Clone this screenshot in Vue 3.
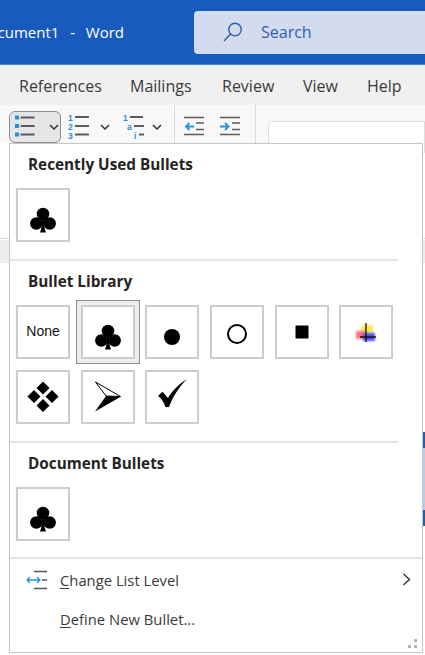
<template>
  <div class="app">
    <header class="titlebar">
      <div class="doc-name"><span>Document1&nbsp;&nbsp;-&nbsp;&nbsp;Word</span></div>
      <div class="search">
        <svg class="search-icon" width="20" height="22" viewBox="0 0 20 22">
          <circle cx="12" cy="8.5" r="6.2" fill="none" stroke="#2f5fae" stroke-width="1.4" />
          <path d="M7.6 13 L1 20" fill="none" stroke="#2f5fae" stroke-width="1.4" />
        </svg>
        <span>Search</span>
      </div>
    </header>

    <nav class="tabs">
      <span v-for="t in tabs" :key="t.name" class="tab" :style="{ width: t.width + 'px' }">{{ t.name }}</span>
    </nav>

    <div class="ribbon">
      <button class="rb-btn bullets active">
        <svg width="24" height="26" viewBox="0 0 24 26">
          <g fill="#2b8fdc">
            <rect x="1" y="1.5" width="4" height="4" />
            <rect x="1" y="10" width="4" height="4" />
            <rect x="1" y="18.500" width="4" height="4" />
          </g>
          <path d="M6.500 3.500H20.500M6.500 12H20.500M6.500 20.500H20.500" stroke="#5c5c5c" stroke-width="1.8" />
        </svg>
        <svg class="chev" width="10" height="6" viewBox="0 0 10 6"><path d="M1 1l4 4 4-4" fill="none" stroke="#333" stroke-width="1.5" /></svg>
      </button>

      <button class="rb-btn numbering">
        <svg width="24" height="28" viewBox="0 0 24 28">
          <g class="num-text">
            <text x="3" y="7.500">1</text>
            <text x="3" y="16.500">2</text>
            <text x="3" y="25.500">3</text>
          </g>
          <path d="M10 4H24M10 13H24M10 21.500H24" stroke="#5c5c5c" stroke-width="1.8" />
        </svg>
        <svg class="chev" width="10" height="6" viewBox="0 0 10 6"><path d="M1 1l4 4 4-4" fill="none" stroke="#333" stroke-width="1.5" /></svg>
      </button>

      <button class="rb-btn multilevel">
        <svg width="30" height="28" viewBox="0 0 30 28">
          <g class="num-text">
            <text x="7" y="7.500">1</text>
            <text x="11" y="16.500">a</text>
            <text x="18" y="25.500">i</text>
          </g>
          <path d="M14 4H27M18 13H28M23 21.500H28" stroke="#5c5c5c" stroke-width="1.8" />
        </svg>
        <svg class="chev" width="10" height="6" viewBox="0 0 10 6"><path d="M1 1l4 4 4-4" fill="none" stroke="#333" stroke-width="1.5" /></svg>
      </button>

      <i class="rb-sep"></i>

      <svg class="indent" width="22" height="24" viewBox="0 0 22 24">
        <path d="M1 3.500H21M13 9H21M13 15.500H21M1 20.500H21" stroke="#5c5c5c" stroke-width="1.6" />
        <path d="M11 12.500H3M6.500 9L3 12.500 6.500 16" fill="none" stroke="#2b8fdc" stroke-width="1.8" />
      </svg>
      <svg class="indent second" width="22" height="24" viewBox="0 0 22 24">
        <path d="M1 3.500H21M13 9H21M13 15.500H21M1 20.500H21" stroke="#5c5c5c" stroke-width="1.6" />
        <path d="M1 12.500H9.500M6 9l3.500 3.500L6 16" fill="none" stroke="#2b8fdc" stroke-width="1.8" />
      </svg>

      <i class="rb-sep last"></i>
      <div class="style-box"></div>
    </div>

    <div class="backdrop"></div>

    <div class="menu">
      <section class="section">
        <h4>Recently Used Bullets</h4>
        <div class="grid">
          <button class="swatch"><svg viewBox="2 2 50 50"><use href="#club" /></svg></button>
        </div>
      </section>

      <section class="section">
        <h4>Bullet Library</h4>
        <div class="grid">
          <button class="swatch none">None</button>
          <button class="swatch selected"><svg viewBox="2 2 50 50"><use href="#club" /></svg></button>
          <button class="swatch">
            <svg viewBox="2 2 50 50"><circle cx="27" cy="32" r="8" /></svg>
          </button>
          <button class="swatch">
            <svg viewBox="2 2 50 50"><circle cx="27" cy="29" r="9" fill="none" stroke="#000" stroke-width="2" /></svg>
          </button>
          <button class="swatch">
            <svg viewBox="2 2 50 50"><rect x="20.5" y="20.500" width="13" height="13" /></svg>
          </button>
          <button class="swatch">
            <svg viewBox="2 2 50 50">
              <g class="soft">
                <rect x="22" y="20" width="12" height="8" fill="#ffe23a" />
                <rect x="17" y="26" width="9" height="8" fill="#ff5a6e" />
                <rect x="24" y="28" width="12" height="8" fill="#3232f0" />
              </g>
              <path d="M27 18V37M21 32H37" stroke="#111" stroke-width="1.3" />
            </svg>
          </button>
          <button class="swatch">
            <svg viewBox="2 2 50 50">
              <path d="M27 11.500l6.500 6.500-6.500 6.500-6.500-6.500zM18 20l6.500 6.500L18 33l-6.500-6.500zM36 20l6.500 6.500L36 33l-6.500-6.500zM27 29l6.500 6.500L27 42l-6.500-6.500z" />
            </svg>
          </button>
          <button class="swatch">
            <svg viewBox="2 2 50 50">
              <path d="M14.500 12 L39.500 26.500 L25 26 Z" fill="#fff" stroke="#000" stroke-width="1" stroke-linejoin="miter" />
              <path d="M14 41.500 L25 26 L39.700 26.700 Z" />
            </svg>
          </button>
          <button class="swatch">
            <svg viewBox="2 2 50 50">
              <path d="M13 26 L17.500 21.700 L23 28 C28 20 34 14 42 9 C34 17 28 26 24 37 L20.500 37 C19 32 16 28 13 26 Z" />
            </svg>
          </button>
        </div>
      </section>

      <section class="section">
        <h4>Document Bullets</h4>
        <div class="grid">
          <button class="swatch"><svg viewBox="2 2 50 50"><use href="#club" /></svg></button>
        </div>
      </section>

      <div class="items">
        <div class="item">
          <svg class="item-icon" width="22" height="20" viewBox="0 0 22 20">
            <path d="M8 1.500H21M8 18.500H21M16 10H21" stroke="#555" stroke-width="1.5" />
            <path d="M1 10H14M4 7L1 10l3 3M11 7l3 3-3 3" fill="none" stroke="#2b8fdc" stroke-width="1.300" />
          </svg>
          <span><u>C</u>hange List Level</span>
          <svg class="item-arrow" width="9" height="13" viewBox="0 0 9 13"><path d="M1.500 1l6 5.500-6 5.500" fill="none" stroke="#333" stroke-width="1.400" /></svg>
        </div>
        <div class="item">
          <span class="item-icon blank"></span>
          <span><u>D</u>efine New Bullet...</span>
        </div>
      </div>

      <div class="grip"><i></i><i></i><i></i></div>
    </div>

    <svg width="0" height="0" class="defs">
      <defs>
        <g id="club">
          <circle cx="27" cy="26" r="6.300" />
          <circle cx="20.300" cy="35.500" r="6.200" />
          <circle cx="33.700" cy="35.500" r="6.200" />
          <path d="M26 30h2c0 6 .4 11 2 14.500h-6c1.600-3.500 2-8.500 2-14.500z" />
        </g>
      </defs>
    </svg>
  </div>
</template>

<script setup>
const tabs = [
  { name: 'References', width: 111 },
  { name: 'Mailings', width: 92 },
  { name: 'Review', width: 81 },
  { name: 'View', width: 64 },
  { name: 'Help', width: 50 }
]
</script>

<style>
html, body { margin: 0; background: #fff; overflow: hidden; }
</style>

<style scoped>
.app {
  position: relative;
  width: 425px; height: 655px;
  overflow: hidden;
  font-family: "Open Sans", "Noto Sans", sans-serif;
  background: #fff;
}

.titlebar {
  height: 64px;
  background: #185abd;
  border-bottom: 1px solid #4f83cf;
  display: flex; align-items: center;
}
.doc-name {
  width: 124px; overflow: hidden;
  display: flex; justify-content: flex-end;
  color: #fff; font-size: 15px; white-space: nowrap;
  word-spacing: 1.5px;
}
.search {
  margin-left: 70px; flex: 1;
  height: 43px;
  background: #d2dcee;
  border-radius: 4px 0 0 4px;
  display: flex; align-items: center;
  color: #2f5fae; font-size: 16px;
}
.search-icon { margin-left: 29px; margin-right: 18px; }

.tabs {
  height: 40px; box-sizing: border-box;
  background: #f0f0f0;
  display: flex; align-items: center;
  padding: 2px 0 0 19px;
  color: #3b3a39; font-size: 16px;
}
.tab { display: block; white-space: nowrap; }

.ribbon {
  height: 38px;
  background: #f8f8f8;
  display: flex; align-items: flex-start;
  padding-left: 9px;
}
.rb-btn {
  border: 1px solid transparent; background: none;
  padding: 0;
  height: 32px; margin-top: 6px;
  display: flex; align-items: center;
  box-sizing: border-box;
}
.rb-btn.bullets { width: 52px; padding-left: 4px; }
.rb-btn.active { background: #e6e6e6; border-color: #8d8d8d; border-radius: 6px; }
.rb-btn.numbering { width: 54px; padding-left: 3px; }
.rb-btn.multilevel { width: 57px; }
.bullets .chev { margin-left: 11px; }
.numbering .chev { margin-left: 11px; }
.multilevel .chev { margin-left: 6px; }
.num-text text { font-size: 8.5px; font-weight: 700; fill: #2b8fdc; }
.rb-sep { display: block; width: 1px; height: 38px; background: #dcdcdc; margin-left: 2px; }
.indent { margin-top: 9px; margin-left: 8px; flex: none; }
.indent.second { margin-left: 14px; }
.rb-sep.last { margin-left: 14px; }
.style-box {
  margin-left: 12px; margin-top: 16px; flex: 1;
  height: 30px;
  background: #fff; border: 1px solid #dedede; border-radius: 5px 0 0 0;
}

.backdrop {
  height: 512px;
  background:
    linear-gradient(#d6d6d6, #d6d6d6) 0 95px / 100% 1px no-repeat,
    linear-gradient(#ececec, #ececec) 0 97px / 100% 23px no-repeat,
    linear-gradient(#1e5fbe, #1e5fbe) 423px 289px / 2px 16px no-repeat,
    linear-gradient(#b8cbe8, #b8cbe8) 423px 305px / 2px 62px no-repeat,
    linear-gradient(#1e5fbe, #1e5fbe) 423px 367px / 2px 16px no-repeat,
    #fff;
}

.menu {
  position: absolute; left: 9px; top: 143px;
  width: 414px; height: 510px;
  box-sizing: border-box;
  background: #fff;
  border: 1px solid #c6c6c6;
  display: flex; flex-direction: column;
}
.section { padding: 8px 0 17px; margin-right: 24px; border-bottom: 2px solid #e4e4e4; }
.section:nth-of-type(3) { padding-bottom: 16px; margin-right: 0; }
.section h4 {
  margin: 0 0 12px 18px;
  height: 24px; line-height: 24px;
  font-size: 15.3px; font-weight: 700; color: #252423;
}
.grid {
  display: grid;
  grid-template-columns: repeat(6, 54px);
  grid-auto-rows: 54px;
  column-gap: 10.7px; row-gap: 11px;
  padding-left: 6px;
}
.swatch {
  width: 54px; height: 54px; padding: 0;
  box-sizing: border-box;
  background: #fff;
  border: 2px solid #cdcdcd;
  display: block;
}
.swatch svg { display: block; width: 50px; height: 50px; }
.swatch.none {
  font-family: "Liberation Sans", Arial, sans-serif;
  font-size: 14px; color: #111;
  margin: 0;
  padding-bottom: 2px;
}
.swatch.selected { box-shadow: 0 0 0 4px #ececec, 0 0 0 5px #8f8f8f; }
.soft { filter: blur(1px); opacity: .85; }

.items { padding-top: 1px; }
.item {
  height: 39px;
  display: flex; align-items: center;
  font-size: 14.8px; color: #3b3a39;
}
.item-icon { margin-left: 16px; margin-right: 12px; flex: none; }
.item-icon.blank { display: block; width: 22px; }
.item u { text-underline-offset: 2px; }
.item-arrow { margin-left: auto; margin-right: 11px; }

.grip {
  position: absolute; right: 5px; bottom: 4px;
  width: 9px; height: 9px;
}
.grip i { position: absolute; width: 3px; height: 3px; background: #b4b4b4; }
.grip i:nth-child(1) { right: 0; top: 0; }
.grip i:nth-child(2) { right: 0; bottom: 0; }
.grip i:nth-child(3) { left: 0; bottom: 0; }

.defs { position: absolute; }
</style>
